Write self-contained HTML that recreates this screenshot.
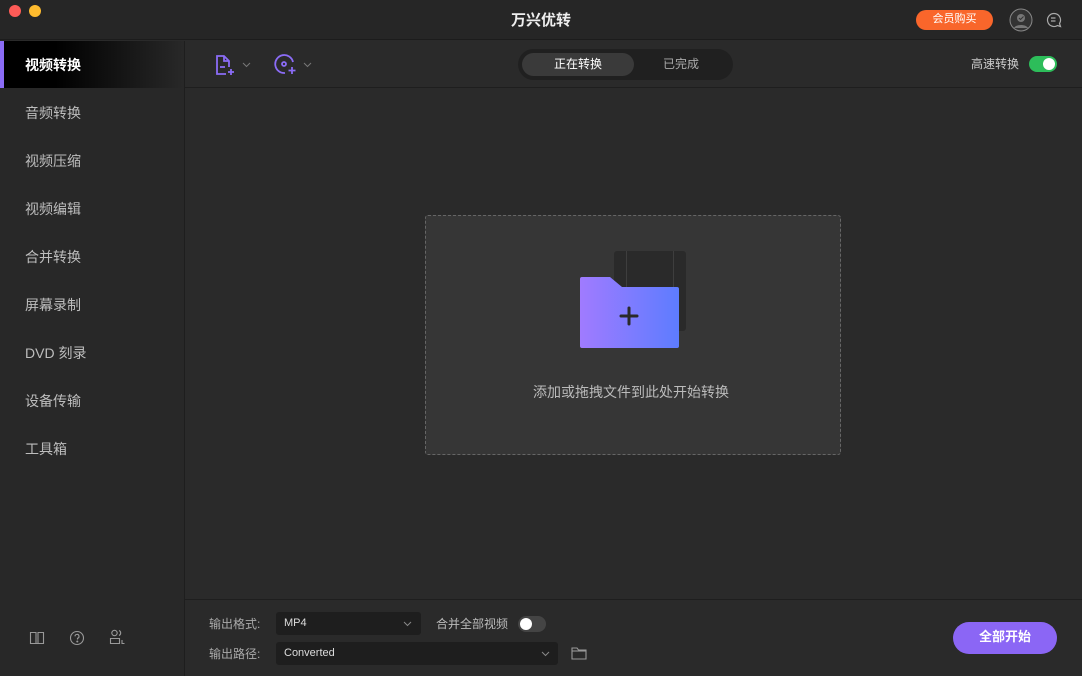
<!DOCTYPE html>
<html><head><meta charset="utf-8"><style>
*{margin:0;padding:0;box-sizing:border-box}
body{width:1082px;height:676px;background:#2a2a2a;font-family:"Liberation Sans","Noto Sans CJK SC",sans-serif;color:#ddd;position:relative;overflow:hidden}
.abs{position:absolute}
.title{left:0;top:0;width:1082px;height:40px;background:#262626;border-bottom:1px solid #1c1c1c}
.side{left:0;top:41px;width:185px;height:635px;background:#282828;border-right:1px solid #1e1e1e}
.item{position:absolute;left:25px;font-size:14px;color:#bdbdbd}
.main{left:185px;top:41px;width:897px;height:635px;background:#2a2a2a}
</style></head><body>
<div class="abs title">
<div class="abs" style="left:9px;top:5px;width:12px;height:12px;border-radius:50%;background:#fd5b57"></div>
<div class="abs" style="left:29px;top:5px;width:12px;height:12px;border-radius:50%;background:#febb2e"></div>
<div class="abs" style="left:0;width:1082px;top:9px;text-align:center;font-size:15px;color:#eee;font-weight:bold">万兴优转</div>
<div class="abs" style="left:916px;top:10px;width:77px;height:20px;border-radius:10px;background:#f9662b;color:#fff;font-size:11px;text-align:center;line-height:19px">会员购买</div>
<svg class="abs" style="left:1009px;top:8px" width="24" height="24" viewBox="0 0 24 24"><circle cx="12" cy="12" r="11" fill="#333" stroke="#888" stroke-width="1"/><circle cx="12" cy="10" r="4" fill="#777"/><path d="M5 20c2-4 12-4 14 0" fill="#777"/><path d="M10 10l1.5 1.5 3-3" stroke="#333" stroke-width="1" fill="none"/></svg>
<svg class="abs" style="left:1045px;top:11px" width="17" height="17" viewBox="0 0 17 17" fill="none" stroke="#aaa" stroke-width="1.2"><path d="M14.5 12.5A6.5 6.5 0 1 0 12.5 14.5L15.5 15.5Z"/><path d="M6 7h4.5M6 10h4.5"/></svg>
</div>
<div class="abs side">
<div class="abs" style="left:0;top:0;width:183px;height:47px;background:linear-gradient(90deg,#000 30%,#282828)"></div>
<div class="abs" style="left:0;top:0;width:4px;height:47px;background:#8b6cf6"></div>
<div class="item" style="top:14px;color:#fff;font-weight:bold">视频转换</div>
<div class="item" style="top:62px">音频转换</div>
<div class="item" style="top:110px">视频压缩</div>
<div class="item" style="top:158px">视频编辑</div>
<div class="item" style="top:206px">合并转换</div>
<div class="item" style="top:254px">屏幕录制</div>
<div class="item" style="top:302px">DVD 刻录</div>
<div class="item" style="top:350px">设备传输</div>
<div class="item" style="top:398px">工具箱</div>
<svg class="abs" style="left:29px;top:589px" width="16" height="16" viewBox="0 0 16 16" fill="none" stroke="#999" stroke-width="1.1"><path d="M1.5 2.5h5.5v11h-5.5zM9 2.5h5.5v11H9zM7 13.5h2"/></svg>
<svg class="abs" style="left:69px;top:589px" width="16" height="16" viewBox="0 0 16 16" fill="none" stroke="#999" stroke-width="1.1"><circle cx="8" cy="8" r="6.5"/><path d="M6 6.3a2 2 0 1 1 2.5 2V9.5"/><circle cx="8.3" cy="11.5" r=".5" fill="#999"/></svg>
<svg class="abs" style="left:109px;top:588px" width="18" height="16" viewBox="0 0 18 16" fill="none" stroke="#999" stroke-width="1.1"><circle cx="5.5" cy="4" r="2.7"/><path d="M10 1.5a2.7 2.7 0 0 1 0 5"/><path d="M1.5 9.5h9v5h-9zM13 11v3.5h2.5"/></svg>
</div>
<div class="abs main">
<div class="abs" style="left:0;top:0;width:897px;height:47px;border-bottom:1px solid #1e1e1e"></div>
<svg class="abs" style="left:29px;top:13px" width="22" height="22" viewBox="0 0 22 22" fill="none" stroke="#8b6cf6" stroke-width="1.8"><path d="M12 20H3V2h7l5 5v6"/><path d="M10 2v5h5"/><path d="M6 13h5"/><path d="M17 15v6M14 18h6"/></svg>
<svg class="abs" style="left:57px;top:21px" width="9" height="6" viewBox="0 0 9 6"><path d="M1 1l3.5 3.5L8 1" stroke="#777" fill="none"/></svg>
<svg class="abs" style="left:89px;top:13px" width="24" height="22" viewBox="0 0 24 22" fill="none" stroke="#8b6cf6" stroke-width="1.8"><path d="M19 8A9 9 0 1 0 11 19"/><circle cx="10" cy="10" r="2"/><path d="M18 13v7M14.5 16.5h7"/></svg>
<svg class="abs" style="left:118px;top:21px" width="9" height="6" viewBox="0 0 9 6"><path d="M1 1l3.5 3.5L8 1" stroke="#777" fill="none"/></svg>
<div class="abs" style="left:333px;top:8px;width:215px;height:31px;border-radius:16px;background:#202020"></div>
<div class="abs" style="left:337px;top:12px;width:112px;height:23px;border-radius:12px;background:#3a3a3a;color:#fff;font-size:12px;text-align:center;line-height:22px">正在转换</div>
<div class="abs" style="left:450px;top:12px;width:92px;height:23px;color:#aaa;font-size:12px;text-align:center;line-height:22px">已完成</div>
<div class="abs" style="left:786px;top:14px;font-size:12px;color:#ccc">高速转换</div>
<div class="abs" style="left:844px;top:15px;width:28px;height:16px;border-radius:8px;background:#2dbd5a"></div>
<div class="abs" style="left:858px;top:17px;width:12px;height:12px;border-radius:50%;background:#fff"></div>
<div class="abs" style="left:240px;top:174px;width:416px;height:240px;background:#363636;border:1px dashed #666;border-radius:3px"></div>
<div class="abs" style="left:429px;top:210px;width:72px;height:80px;background:#2a2a2a;border-radius:3px"></div>
<div class="abs" style="left:441px;top:210px;width:1px;height:80px;background:#3e3e3e"></div>
<div class="abs" style="left:488px;top:210px;width:1px;height:80px;background:#3e3e3e"></div>
<svg class="abs" style="left:395px;top:236px" width="99" height="71" viewBox="0 0 99 71"><defs><linearGradient id="g" x1="0" x2="1"><stop offset="0" stop-color="#a07bff"/><stop offset="1" stop-color="#5d7cff"/></linearGradient></defs><path d="M2 0h28l12 10h55a2 2 0 0 1 2 2v57a2 2 0 0 1-2 2H2a2 2 0 0 1-2-2V2a2 2 0 0 1 2-2z" fill="url(#g)"/><path d="M49 31v16M41 39h16" stroke="#2a2a2a" stroke-width="3" stroke-linecap="round"/></svg>
<div class="abs" style="left:238px;top:341px;width:416px;text-align:center;font-size:14px;color:#bbb">添加或拖拽文件到此处开始转换</div>
<div class="abs" style="left:0;top:558px;width:897px;height:1px;background:#1e1e1e"></div>
<div class="abs" style="left:24px;top:574px;font-size:12px;color:#aaa">输出格式:</div>
<div class="abs" style="left:91px;top:571px;width:145px;height:23px;background:#1e1e1e;border-radius:3px;font-size:11px;color:#ddd;line-height:23px;padding-left:8px">MP4</div>
<svg class="abs" style="left:218px;top:580px" width="9" height="6" viewBox="0 0 9 6"><path d="M1 1l3.5 3.5L8 1" stroke="#888" fill="none"/></svg>
<div class="abs" style="left:251px;top:574px;font-size:12px;color:#bbb">合并全部视频</div>
<div class="abs" style="left:333px;top:575px;width:28px;height:16px;border-radius:8px;background:#444"></div>
<div class="abs" style="left:335px;top:577px;width:12px;height:12px;border-radius:50%;background:#fff"></div>
<div class="abs" style="left:24px;top:604px;font-size:12px;color:#aaa">输出路径:</div>
<div class="abs" style="left:91px;top:601px;width:282px;height:23px;background:#1e1e1e;border-radius:3px;font-size:11px;color:#ddd;line-height:23px;padding-left:8px">Converted</div>
<svg class="abs" style="left:356px;top:610px" width="9" height="6" viewBox="0 0 9 6"><path d="M1 1l3.5 3.5L8 1" stroke="#888" fill="none"/></svg>
<svg class="abs" style="left:386px;top:606px" width="16" height="13" viewBox="0 0 16 13" fill="none" stroke="#999" stroke-width="1.1"><path d="M1 1h5l1.5 2H15v9H1z"/><path d="M1 4h14"/></svg>
<div class="abs" style="left:768px;top:581px;width:104px;height:32px;border-radius:16px;background:#8b66f5;color:#fff;font-size:13px;font-weight:bold;text-align:center;line-height:30px">全部开始</div>
</div>
</body></html>
